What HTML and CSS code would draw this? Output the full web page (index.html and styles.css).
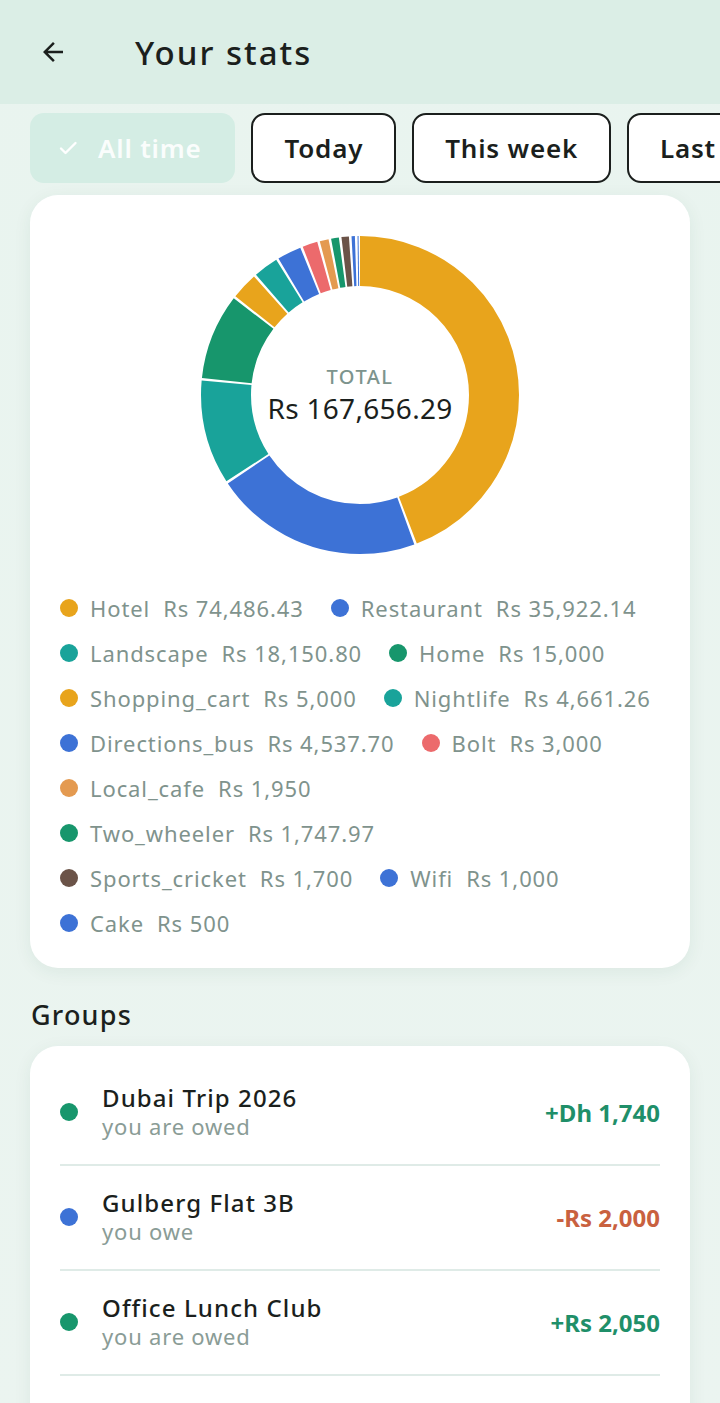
FILE: index.html
```html
<!DOCTYPE html>
<html lang="en">
<head>
  <meta charset="UTF-8">
  <meta name="viewport" content="width=device-width, initial-scale=1.0">
  <title>Your stats</title>
  <link rel="stylesheet" href="styles.css">
</head>
<body>

  <header class="appbar">
    <svg class="back-icon" viewBox="0 0 24 24" width="30" height="30">
      <path d="M20 11H7.83l5.59-5.59L12 4l-8 8 8 8 1.41-1.41L7.83 13H20v-2z" fill="#1b1f1d"/>
    </svg>
    <h1 class="appbar-title">Your stats</h1>
  </header>

  <!-- Period filters -->
  <div class="filters">
    <button class="chip chip-active">
      <svg viewBox="0 0 24 24" width="24" height="24"><path d="M5 12.5l4.5 4.5L19.5 7" fill="none" stroke="#fff" stroke-width="2.4" stroke-linecap="round" stroke-linejoin="round"/></svg>
      All time
    </button>
    <button class="chip">Today</button>
    <button class="chip">This week</button>
    <button class="chip">Last month</button>
  </div>

  <!-- Spending by category -->
  <section class="card chart-card">
    <div class="donut">
      <svg id="donutChart" viewBox="0 0 320 320" width="320" height="320"></svg>
      <div class="donut-center">
        <span class="donut-label">TOTAL</span>
        <span class="donut-total">Rs 167,656.29</span>
      </div>
    </div>
    <div class="legend" id="legend"></div>
  </section>

  <h2 class="section-title">Groups</h2>
  <section class="card groups-card">
    <div class="group-row">
      <span class="dot dot-green"></span>
      <div class="group-info">
        <div class="group-name">Dubai Trip 2026</div>
        <div class="group-sub">you are owed</div>
      </div>
      <div class="group-amount positive">+Dh 1,740</div>
    </div>
    <div class="group-row">
      <span class="dot dot-blue"></span>
      <div class="group-info">
        <div class="group-name">Gulberg Flat 3B</div>
        <div class="group-sub">you owe</div>
      </div>
      <div class="group-amount negative">-Rs 2,000</div>
    </div>
    <div class="group-row">
      <span class="dot dot-green"></span>
      <div class="group-info">
        <div class="group-name">Office Lunch Club</div>
        <div class="group-sub">you are owed</div>
      </div>
      <div class="group-amount positive">+Rs 2,050</div>
    </div>
  </section>

  <script>
    // Category totals, grouped the way the legend wraps
    const legendRows = [
      [
        { name: 'Hotel', amount: '74,486.43', value: 74486.43, color: '#e8a41c' },
        { name: 'Restaurant', amount: '35,922.14', value: 35922.14, color: '#3d72d6' }
      ],
      [
        { name: 'Landscape', amount: '18,150.80', value: 18150.80, color: '#19a39a' },
        { name: 'Home', amount: '15,000', value: 15000, color: '#17966c' }
      ],
      [
        { name: 'Shopping_cart', amount: '5,000', value: 5000, color: '#e8a41c' },
        { name: 'Nightlife', amount: '4,661.26', value: 4661.26, color: '#19a39a' }
      ],
      [
        { name: 'Directions_bus', amount: '4,537.70', value: 4537.70, color: '#3d72d6' },
        { name: 'Bolt', amount: '3,000', value: 3000, color: '#ec6a6c' }
      ],
      [
        { name: 'Local_cafe', amount: '1,950', value: 1950, color: '#e49a50' }
      ],
      [
        { name: 'Two_wheeler', amount: '1,747.97', value: 1747.97, color: '#17966c' }
      ],
      [
        { name: 'Sports_cricket', amount: '1,700', value: 1700, color: '#6b5348' },
        { name: 'Wifi', amount: '1,000', value: 1000, color: '#3d72d6' }
      ],
      [
        { name: 'Cake', amount: '500', value: 500, color: '#3d72d6' }
      ]
    ];
    const categories = legendRows.flat();

    // Draw donut segments, clockwise from 12 o'clock
    const svg = document.getElementById('donutChart');
    const radius = 134;
    const circumference = 2 * Math.PI * radius;
    const total = categories.reduce((sum, c) => sum + c.value, 0);
    const gap = 2.2;
    let offset = 0;
    categories.forEach(cat => {
      const len = cat.value / total * circumference;
      const circle = document.createElementNS('http://www.w3.org/2000/svg', 'circle');
      circle.setAttribute('cx', 160);
      circle.setAttribute('cy', 160);
      circle.setAttribute('r', radius);
      circle.setAttribute('fill', 'none');
      circle.setAttribute('stroke', cat.color);
      circle.setAttribute('stroke-width', 50);
      circle.setAttribute('stroke-dasharray', Math.max(len - gap, 1) + ' ' + circumference);
      circle.setAttribute('stroke-dashoffset', -offset);
      circle.setAttribute('transform', 'rotate(-90 160 160)');
      svg.appendChild(circle);
      offset += len;
    });

    // Legend
    const legend = document.getElementById('legend');
    legendRows.forEach(items => {
      const row = document.createElement('div');
      row.className = 'legend-row';
      items.forEach(cat => {
        const item = document.createElement('div');
        item.className = 'legend-item';
        item.innerHTML = `
          <span class="dot" style="background:${cat.color}"></span>
          <span class="legend-name">${cat.name}</span>
          <span class="legend-value">Rs ${cat.amount}</span>
        `;
        row.appendChild(item);
      });
      legend.appendChild(row);
    });
  </script>

</body>
</html>
```

FILE: styles.css
```css
body {
  margin: 0;
  font-family: "Noto Sans", sans-serif;
  background: linear-gradient(#e9f4ef, #ebf4f0);
  color: #1b1f1d;
  overflow: hidden;
}

/* App bar */
.appbar {
  height: 104px;
  background-color: #dbeee6;
  display: flex;
  align-items: center;
  padding-left: 38px;
}
.back-icon {
  margin-right: 67px;
}
.appbar-title {
  margin: 0;
  font-size: 33px;
  font-weight: 500;
  letter-spacing: 2px;
}

/* Filter chips */
.filters {
  display: flex;
  gap: 16px;
  padding: 9px 30px 0;
  overflow: hidden;
  white-space: nowrap;
}
.chip {
  flex-shrink: 0;
  height: 70px;
  padding: 0 31px;
  border: 2px solid #1b1f1d;
  border-radius: 14px;
  background: #fff;
  font-family: inherit;
  font-size: 26px;
  font-weight: 600;
  letter-spacing: 0.8px;
  color: #1b1f1d;
  display: flex;
  align-items: center;
}
.chip-active {
  border-color: transparent;
  background-color: #d4ede4;
  color: rgba(255, 255, 255, 0.92);
  padding: 0 32px 0 24px;
  gap: 18px;
}

/* Cards */
.card {
  background: #fff;
  border-radius: 28px;
  margin: 0 30px;
  box-shadow: 0 4px 18px rgba(30, 80, 60, 0.07);
}
.chart-card {
  margin-top: 12px;
  padding: 40px 30px 30px;
}

/* Donut */
.donut {
  display: grid;
  justify-content: center;
  align-items: center;
}
.donut svg,
.donut-center {
  grid-area: 1 / 1;
}
.donut-center {
  display: flex;
  flex-direction: column;
  align-items: center;
}
.donut-label {
  font-size: 20px;
  font-weight: 500;
  letter-spacing: 1.5px;
  color: #7d948d;
  line-height: 26px;
}
.donut-total {
  font-size: 28px;
  letter-spacing: 0.3px;
  color: #1b1f1d;
  line-height: 36px;
}

/* Legend */
.legend {
  margin-top: 38px;
  display: flex;
  flex-direction: column;
  gap: 15px;
}
.legend-row {
  display: flex;
  gap: 27px;
}
.legend-item {
  display: flex;
  align-items: center;
  white-space: nowrap;
  font-size: 22px;
  line-height: 30px;
  letter-spacing: 0.9px;
  color: #7f938d;
}
.legend-item .dot {
  margin-right: 12px;
}
.legend-value {
  margin-left: 13px;
}

.dot {
  width: 18px;
  height: 18px;
  border-radius: 50%;
  flex-shrink: 0;
}
.dot-green {
  background-color: #17966c;
}
.dot-blue {
  background-color: #3d72d6;
}

/* Groups */
.section-title {
  margin: 30px 31px 14px;
  font-size: 27px;
  font-weight: 500;
  line-height: 34px;
  letter-spacing: 1.2px;
}
.groups-card {
  padding: 15px 30px 80px;
}
.group-row {
  display: flex;
  align-items: center;
  padding: 23px 0 24px;
  border-bottom: 2px solid #dfebe7;
}
.group-row .dot {
  margin-right: 24px;
}
.group-info {
  flex: 1;
  display: flex;
  flex-direction: column;
  gap: 1px;
}
.group-name {
  font-size: 24px;
  line-height: 27px;
  font-weight: 500;
  letter-spacing: 1.1px;
}
.group-sub {
  font-size: 22px;
  line-height: 28px;
  letter-spacing: 0.8px;
  color: #8a9c96;
}
.group-amount {
  font-size: 24px;
  font-weight: 700;
  color: #8a9c96;
}
.group-amount.positive {
  color: #1f8f69;
}
.group-amount.negative {
  color: #c9613f;
}
```
